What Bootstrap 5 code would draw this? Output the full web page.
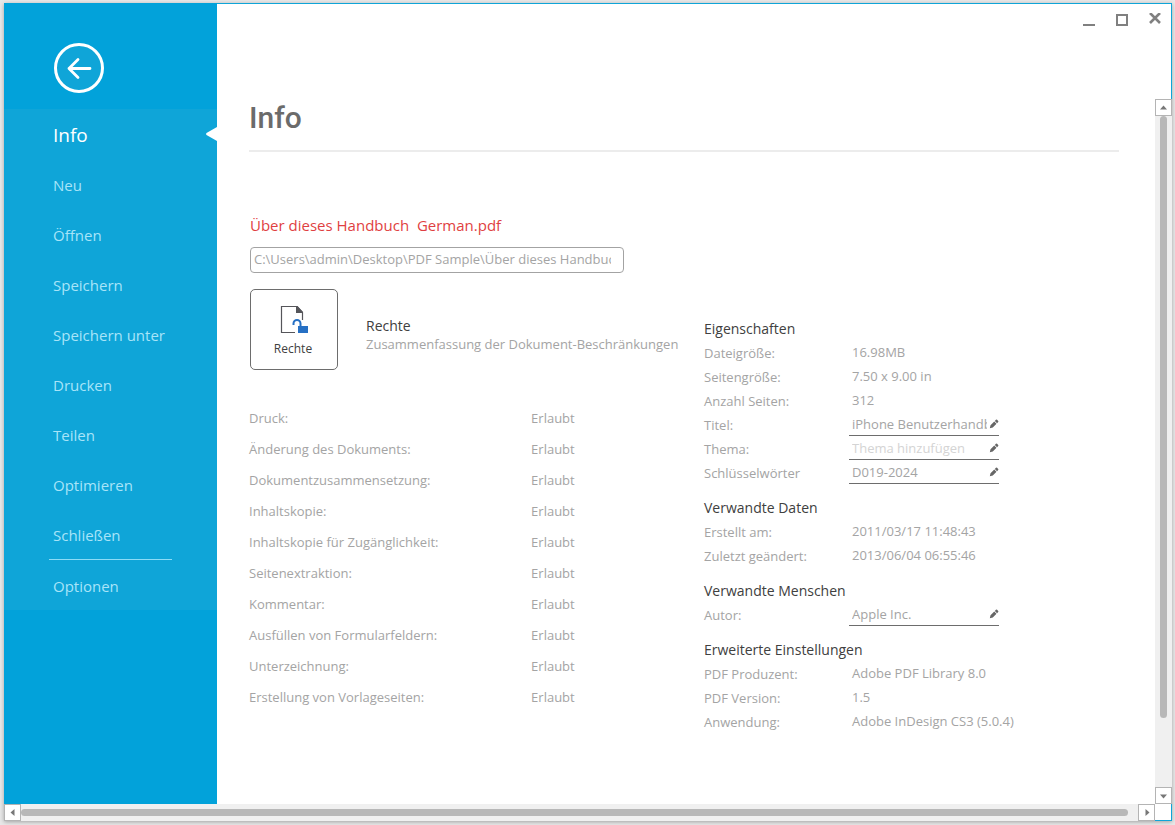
<!DOCTYPE html>
<html lang="de">
<head>
<meta charset="utf-8">
<meta name="viewport" content="width=device-width, initial-scale=1">
<title>Info</title>
<link href="https://cdn.jsdelivr.net/npm/bootstrap@5.3.0/dist/css/bootstrap.min.css" rel="stylesheet">
<style>
  :root { --blue: #02a2da; --band: #0fa5d8; --soft: #a4a4a4; --ink: #404040; --line: #6d6d6d; }
  body { min-height: 100vh; padding: 3px 3px 4px 4px; background: #e8e8e8; font-family: "Open Sans", "Noto Sans", sans-serif; font-size: 13px; line-height: 20px; color: var(--soft); }
  .app-window { background: #fff; box-shadow: 0 1px 4px rgba(0,0,0,.3); }
  .app-side { width: 213px; background: var(--blue); }
  .back-btn { width: 50px; height: 50px; margin: 40px 0 16px 50px; }
  .side-nav { background: var(--band); }
  .side-nav .nav-link { height: 50px; padding: 0 0 0 49px; line-height: 52px; font-size: 15px; color: #a8e4f8; }
  .side-nav .nav-link:hover { color: #fff; }
  .side-nav .nav-link.active { font-size: 19px; color: #fff; }
  .active-mark { top: 18px; right: 0; }
  .side-rule { height: 1px; margin: 0 45px; background: #8cdcf6; }
  .title-bar { height: 96px; padding: 9px 9px 0 0; gap: 19px; border-top: 1px solid var(--band); border-right: 1px solid var(--band); }
  .content-pane { padding: 0 36px 60px 32px; }
  .page-title { padding-bottom: 13px; border-bottom: 2px solid #ececec; font: 500 30px/38px Roboto, sans-serif; color: #6b6b6b; }
  .file-name { margin: 62px 0 11px 1px; font-size: 15px; line-height: 22px; color: #df3f42; white-space: pre; }
  .path-box { width: 374px; height: 26px; margin-left: 1px; padding: 0 12px 2px 3px; border: 1px solid #a3a3a3; border-radius: 4px; font-size: 13px; color: var(--soft); }
  .info-grid { display: grid; grid-template-columns: 455fr 415fr; }
  .rights-row { margin: 16px 0 32px 1px; gap: 28px; }
  .rights-btn { width: 88px; height: 81px; padding: 5px 2px 0 0; border: 1px solid var(--line); border-radius: 5px; font-size: 12px; line-height: 20px; color: var(--ink); }
  .rights-head, .group-head { font-size: 14px; color: var(--ink); font-weight: 400; }
  .perm-table th, .perm-table td { height: 31px; padding: 0; font-weight: 400; color: inherit; }
  .perm-table th { width: 62%; }
  .prop-col { padding-top: 44px; }
  .group-head { margin: 0; line-height: 24px; }
  .group-head:not(:first-of-type) { margin-top: 11px; }
  .prop-line { height: 24px; line-height: 24px; }
  .prop-line dt { width: 145px; font-weight: 400; }
  .prop-line dd { margin: 0; padding-left: 3px; line-height: 23px; }
  .prop-line dd.edit-cell { width: 150px; height: 22px; margin-top: 1px; padding-bottom: 1px; border-bottom: 1px solid var(--line); }
  .edit-cell input { min-width: 0; padding: 0; border: 0; background: none; color: inherit; line-height: 20px; outline-offset: 1px; }
  .edit-cell input::placeholder { color: #d4d4d4; opacity: 1; }
  .pen-btn { width: 12px; margin-left: 2px; }
  .bar-v, .bar-h { background: #f0f0f0; }
  .bar-v { width: 17px; }
  .bar-h { height: 17px; }
  .bar-btn { flex: none; width: 17px; height: 17px; background: #fff; border: 1px solid #b4b4b4; }
  .bar-btn svg { display: block; }
  .thumb { background: #b8b8b8; border-radius: 4px; }
  .bar-v .thumb { width: 7px; }
  .bar-h .thumb { height: 7px; }
  .bar-corner { flex: none; width: 17px; background: #fff; border: solid var(--band); border-width: 0 1px 1px 0; }
</style>
</head>
<body class="d-flex flex-column">
<div class="app-window flex-grow-1 d-flex flex-column">
  <div class="flex-grow-1 d-flex">
    <aside class="app-side flex-shrink-0">
      <button class="back-btn btn p-0 border-0 d-block" type="button" aria-label="Zurück">
        <svg class="d-block" width="50" height="50" viewBox="0 0 50 50" fill="none" stroke="#fff" stroke-width="3"><circle cx="25" cy="25" r="23.5" fill="#0fa5d8"/><path d="M36 25.5H15M24 16.5l-9 9 9 9" stroke-linecap="round" stroke-linejoin="round" stroke-width="2.8"/></svg>
      </button>
      <nav class="side-nav nav flex-column">
        <a class="nav-link active position-relative" href="#" aria-current="page">Info
          <svg class="active-mark position-absolute" width="12" height="14" viewBox="0 0 12 14" fill="#fff"><path d="M12 0v14L1.500 8Q.5 7 1.500 6z"/></svg></a>
        <a class="nav-link" href="#">Neu</a>
        <a class="nav-link" href="#">Öffnen</a>
        <a class="nav-link" href="#">Speichern</a>
        <a class="nav-link" href="#">Speichern unter</a>
        <a class="nav-link" href="#">Drucken</a>
        <a class="nav-link" href="#">Teilen</a>
        <a class="nav-link" href="#">Optimieren</a>
        <a class="nav-link" href="#">Schließen</a>
        <div class="side-rule"></div>
        <a class="nav-link" href="#">Optionen</a>
      </nav>
    </aside>
    <div class="flex-grow-1 d-flex flex-column">
      <div class="title-bar d-flex justify-content-end align-items-start flex-shrink-0">
        <button class="btn p-0 border-0 d-flex" type="button" aria-label="Minimieren"><svg width="14" height="14" viewBox="0 0 14 14" fill="#808080"><path d="M1 11h12v2H1z"/></svg></button>
        <button class="btn p-0 border-0 d-flex" type="button" aria-label="Maximieren"><svg width="14" height="14" viewBox="0 0 14 14" fill="none" stroke="#808080" stroke-width="2"><path d="M2 2h10v10H2z"/></svg></button>
        <button class="btn p-0 border-0 d-flex" type="button" aria-label="Schließen"><svg width="14" height="14" viewBox="0 0 14 14" fill="none" stroke="#808080" stroke-width="2.600"><path d="M2 0l10 10M12 0l-10 10"/></svg></button>
      </div>
      <div class="flex-grow-1 d-flex">
        <main class="content-pane flex-grow-1">
          <h1 class="page-title m-0">Info</h1>
          <h2 class="file-name">Über dieses Handbuch  German.pdf</h2>
          <input class="path-box d-block" type="text" readonly aria-label="Dateipfad" value="C:\Users\admin\Desktop\PDF Sample\Über dieses Handbuch  German.pdf">
          <div class="info-grid">
            <section>
              <div class="rights-row d-flex align-items-center">
                <button class="rights-btn btn d-flex flex-column align-items-center justify-content-center" type="button">
                  <svg width="30" height="30" viewBox="0 0 30 30"><path d="M17 27.500H3.500V1.500H19l5.500 6V15" fill="none" stroke="#55555a" stroke-width="1.200"/><path d="M18 1h1.500L25 7v1h-7z" fill="#55555a"/><path d="M15.500 20v-1.500a3.500 3.500 0 0 1 7 0V22" fill="none" stroke="#2670c4" stroke-width="2"/><path d="M20 21h10v7H20z" fill="#2670c4"/></svg>
                  <span class="pt-1">Rechte</span>
                </button>
                <div class="pt-2 mt-1 text-nowrap">
                  <h3 class="rights-head m-0 lh-sm">Rechte</h3>
                  <div>Zusammenfassung der Dokument-Beschränkungen</div>
                </div>
              </div>
              <table class="perm-table w-100">
                <tbody>
                  <tr><th scope="row">Druck:</th><td>Erlaubt</td></tr>
                  <tr><th scope="row">Änderung des Dokuments:</th><td>Erlaubt</td></tr>
                  <tr><th scope="row">Dokumentzusammensetzung:</th><td>Erlaubt</td></tr>
                  <tr><th scope="row">Inhaltskopie:</th><td>Erlaubt</td></tr>
                  <tr><th scope="row">Inhaltskopie für Zugänglichkeit:</th><td>Erlaubt</td></tr>
                  <tr><th scope="row">Seitenextraktion:</th><td>Erlaubt</td></tr>
                  <tr><th scope="row">Kommentar:</th><td>Erlaubt</td></tr>
                  <tr><th scope="row">Ausfüllen von Formularfeldern:</th><td>Erlaubt</td></tr>
                  <tr><th scope="row">Unterzeichnung:</th><td>Erlaubt</td></tr>
                  <tr><th scope="row">Erstellung von Vorlageseiten:</th><td>Erlaubt</td></tr>
                </tbody>
              </table>
            </section>
            <section class="prop-col text-nowrap">
              <svg class="d-none"><symbol id="pen" viewBox="0 0 12 12"><path d="M1 11l.8-3.500L6.300 3l2.700 2.700-4.500 4.500zM7 2.300L8.300 1Q9 .4 9.700 1L11 2.300q.6.700 0 1.400L9.700 5z" fill="#666"/></symbol></svg>
              <h3 class="group-head">Eigenschaften</h3>
              <dl class="m-0">
                <div class="prop-line d-flex"><dt>Dateigröße:</dt><dd>16.98MB</dd></div>
                <div class="prop-line d-flex"><dt>Seitengröße:</dt><dd>7.50 x 9.00 in</dd></div>
                <div class="prop-line d-flex"><dt>Anzahl Seiten:</dt><dd>312</dd></div>
                <div class="prop-line d-flex"><dt><label for="f-titel">Titel:</label></dt><dd class="edit-cell d-flex align-items-center"><input class="flex-grow-1" id="f-titel" type="text" value="iPhone Benutzerhandbuch"><button class="pen-btn btn p-0 border-0 d-flex" type="button" aria-label="Titel bearbeiten"><svg width="10" height="10"><use href="#pen"/></svg></button></dd></div>
                <div class="prop-line d-flex"><dt><label for="f-thema">Thema:</label></dt><dd class="edit-cell d-flex align-items-center"><input class="flex-grow-1" id="f-thema" type="text" placeholder="Thema hinzufügen"><button class="pen-btn btn p-0 border-0 d-flex" type="button" aria-label="Thema bearbeiten"><svg width="10" height="10"><use href="#pen"/></svg></button></dd></div>
                <div class="prop-line d-flex"><dt><label for="f-wort">Schlüsselwörter</label></dt><dd class="edit-cell d-flex align-items-center"><input class="flex-grow-1" id="f-wort" type="text" value="D019-2024"><button class="pen-btn btn p-0 border-0 d-flex" type="button" aria-label="Schlüsselwörter bearbeiten"><svg width="10" height="10"><use href="#pen"/></svg></button></dd></div>
              </dl>
              <h3 class="group-head">Verwandte Daten</h3>
              <dl class="m-0">
                <div class="prop-line d-flex"><dt>Erstellt am:</dt><dd>2011/03/17 11:48:43</dd></div>
                <div class="prop-line d-flex"><dt>Zuletzt geändert:</dt><dd>2013/06/04 06:55:46</dd></div>
              </dl>
              <h3 class="group-head">Verwandte Menschen</h3>
              <dl class="m-0">
                <div class="prop-line d-flex"><dt><label for="f-autor">Autor:</label></dt><dd class="edit-cell d-flex align-items-center"><input class="flex-grow-1" id="f-autor" type="text" value="Apple Inc."><button class="pen-btn btn p-0 border-0 d-flex" type="button" aria-label="Autor bearbeiten"><svg width="10" height="10"><use href="#pen"/></svg></button></dd></div>
              </dl>
              <h3 class="group-head">Erweiterte Einstellungen</h3>
              <dl class="m-0">
                <div class="prop-line d-flex"><dt>PDF Produzent:</dt><dd>Adobe PDF Library 8.0</dd></div>
                <div class="prop-line d-flex"><dt>PDF Version:</dt><dd>1.5</dd></div>
                <div class="prop-line d-flex"><dt>Anwendung:</dt><dd>Adobe InDesign CS3 (5.0.4)</dd></div>
              </dl>
            </section>
          </div>
        </main>
        <div class="bar-v flex-shrink-0 d-flex flex-column align-items-center">
          <button class="bar-btn p-0" type="button" aria-label="Nach oben"><svg width="15" height="15" fill="#777"><path d="M4 9.500h7L7.500 5.500z"/></svg></button>
          <div class="flex-grow-1 d-flex"><div class="thumb" style="height:89.700%"></div></div>
          <button class="bar-btn p-0" type="button" aria-label="Nach unten"><svg width="15" height="15" fill="#777"><path d="M4 6.500h7l-3.500 4z"/></svg></button>
        </div>
      </div>
    </div>
  </div>
  <div class="bar-h d-flex flex-shrink-0">
    <button class="bar-btn p-0" type="button" aria-label="Nach links"><svg width="15" height="15" fill="#777"><path d="M9.500 4v7l-4-3.500z"/></svg></button>
    <div class="flex-grow-1 d-flex align-items-center"><div class="thumb" style="width:99.100%"></div></div>
    <button class="bar-btn p-0" type="button" aria-label="Nach rechts"><svg width="15" height="15" fill="#777"><path d="M6.500 4v7l4-3.500z"/></svg></button>
    <div class="bar-corner"></div>
  </div>
</div>
<script src="https://cdn.jsdelivr.net/npm/bootstrap@5.3.0/dist/js/bootstrap.bundle.min.js"></script>
</body>
</html>
